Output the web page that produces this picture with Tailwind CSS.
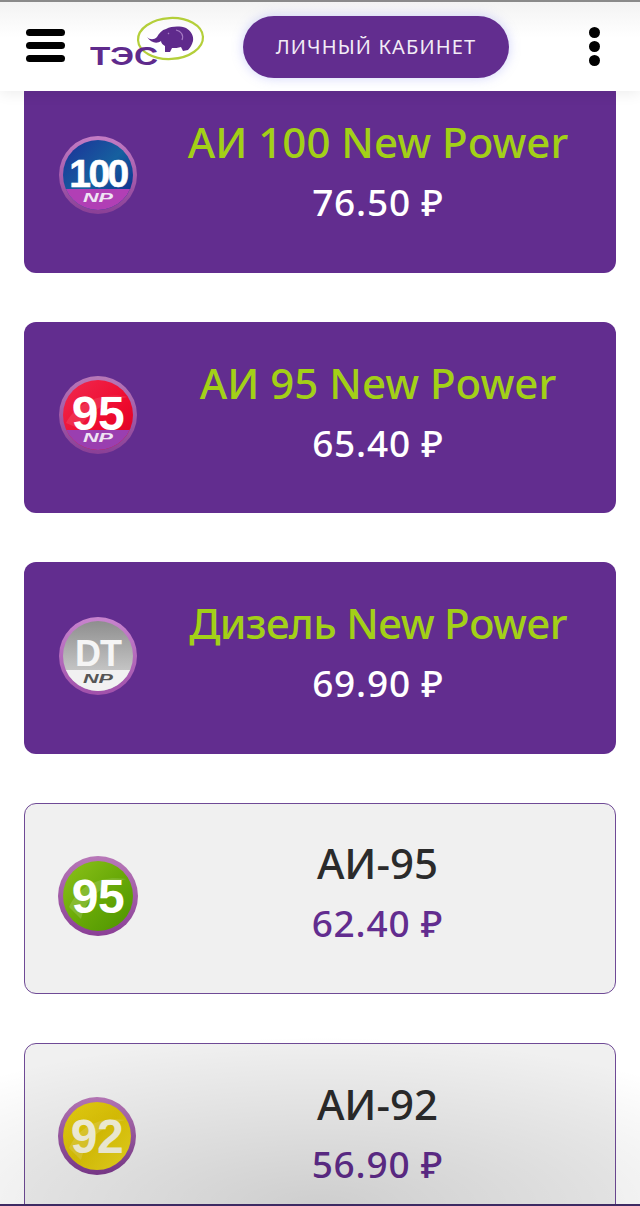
<!DOCTYPE html>
<html lang="en">

<head>
    <meta charset="UTF-8">
    <meta name="viewport" content="width=device-width, initial-scale=1.0">
    <title>ТЭС</title>
    <script src="https://cdn.jsdelivr.net/npm/@tailwindcss/browser@4"></script>
</head>

<body class="bg-white font-['Noto_Sans',sans-serif]">
    <div class="relative w-[640px] h-[1206px] overflow-hidden">
        <!-- Header -->
        <header class="relative z-10 h-[91px] bg-gradient-to-b from-[#f3f3f3] to-white to-40% border-t-2 border-[#8a8a8a] shadow-[0_2px_14px_rgba(0,0,0,0.08)] flex items-center">
            <div class="ml-[26px] w-[39px] flex flex-col gap-[6px] -mt-[2px]">
                <span class="block h-[7px] rounded-full bg-black"></span>
                <span class="block h-[7px] rounded-full bg-black"></span>
                <span class="block h-[7px] rounded-full bg-black"></span>
            </div>
            <svg class="ml-[25px] -mt-[3px] shrink-0" width="116" height="60" viewBox="90 15 116 60">
                <ellipse cx="170.5" cy="38.5" rx="32.5" ry="20.5" transform="rotate(-3 170.5 38.5)" fill="none" stroke="#b4cf3a" stroke-width="2.2"/>
                <path d="M147 37C150 40 154 40 157 37C159 33 162 30 166 29C172 26 180 26 186 28C191 31 194 36 193 41C192 45 190 48 188 50L183 51L181 47C178 48 175 48 172 48L170 52L165 52L165 46C163 45 161 43 161 41C157 44 151 43 147 37Z" fill="#5f2a8c"/>
                <path d="M176 30C181 31 184 35 182 40M168 33l1 1" fill="none" stroke="#a77bc4" stroke-width="1.2"/>
                <text x="90" y="65" font-family="Liberation Sans" font-weight="700" font-size="25" textLength="68" lengthAdjust="spacingAndGlyphs" fill="#5f2a8c">ТЭС</text>
            </svg>
            <a class="ml-[37px] w-[266px] h-[62px] rounded-full bg-[#622d8f] text-[#f2ecf6] text-[20px] tracking-[1.15px] flex items-center justify-center shadow-[0_0_12px_rgba(120,130,240,0.35)]">ЛИЧНЫЙ КАБИНЕТ</a>
            <div class="ml-[80px] flex flex-col gap-[3px]">
                <span class="block w-[11px] h-[11px] rounded-full bg-black"></span>
                <span class="block w-[11px] h-[11px] rounded-full bg-black"></span>
                <span class="block w-[11px] h-[11px] rounded-full bg-black"></span>
            </div>
        </header>

        <!-- Fuel list -->
        <main class="px-[24px] flex flex-col gap-[49px] -mt-[10px]">
            <section class="h-[192px] rounded-[12px] bg-[#622d8f] flex items-center">
                <div class="w-[116px] pl-[34px] pb-[5px] shrink-0">
                    <svg width="80" height="80" viewBox="0 0 80 80">
                        <defs>
                            <linearGradient id="ring1" x1="0" y1="0" x2="0" y2="1">
                                <stop offset="0" stop-color="#c47cc4"/>
                                <stop offset="1" stop-color="#8a3f96"/>
                            </linearGradient>
                            <linearGradient id="blue" x1="0" y1="0" x2="1" y2="1">
                                <stop offset="0" stop-color="#1c2f98"/>
                                <stop offset="0.5" stop-color="#16609f"/>
                                <stop offset="1" stop-color="#0a1f8a"/>
                            </linearGradient>
                            <clipPath id="clip1"><circle cx="40" cy="40" r="35"/></clipPath>
                        </defs>
                        <circle cx="40" cy="40" r="39" fill="url(#ring1)"/>
                        <circle cx="40" cy="40" r="35" fill="url(#blue)"/>
                        <rect x="0" y="54" width="80" height="26" fill="#b13fb5" clip-path="url(#clip1)"/>
                        <text x="40" y="52" text-anchor="middle" font-family="Liberation Sans" font-weight="700" font-size="39" letter-spacing="-2.5" fill="#fff" stroke="#fff" stroke-width="0.6">100</text>
                        <text x="40" y="67" text-anchor="middle" font-family="Liberation Sans" font-weight="700" font-style="italic" font-size="12" textLength="30" lengthAdjust="spacingAndGlyphs" fill="#efe3f3">NP</text>
                    </svg>
                </div>
                <div class="flex-1 text-center pb-[10px]">
                    <h2 class="text-[42px] leading-[60px] font-medium text-[#a3d017]">АИ 100 New Power</h2>
                    <p class="text-[37px] leading-[60px] tracking-[0.8px] font-medium text-white">76.50 ₽</p>
                </div>
            </section>

            <section class="h-[191.3px] rounded-[12px] bg-[#622d8f] flex items-center">
                <div class="w-[116px] pl-[34px] pb-[5px] shrink-0">
                    <svg width="80" height="80" viewBox="0 0 80 80">
                        <defs>
                            <linearGradient id="ring2" x1="0" y1="0" x2="0" y2="1">
                                <stop offset="0" stop-color="#b878b8"/>
                                <stop offset="1" stop-color="#8a3f96"/>
                            </linearGradient>
                            <linearGradient id="red" x1="0" y1="0" x2="1" y2="1">
                                <stop offset="0" stop-color="#f02a50"/>
                                <stop offset="0.6" stop-color="#ee0a2e"/>
                                <stop offset="1" stop-color="#d80020"/>
                            </linearGradient>
                            <clipPath id="clip2"><circle cx="40" cy="40" r="35"/></clipPath>
                        </defs>
                        <circle cx="40" cy="40" r="39" fill="url(#ring2)"/>
                        <circle cx="40" cy="40" r="35" fill="url(#red)"/>
                        <path d="M8 48C18 28 44 16 70 22C50 26 30 36 22 54Z" fill="#fff" opacity="0.1"/>
                        <rect x="0" y="55" width="80" height="25" fill="#9a3fb0" clip-path="url(#clip2)"/>
                        <text x="40" y="55" text-anchor="middle" font-family="Liberation Sans" font-weight="700" font-size="48" letter-spacing="-0.5" fill="#fff">95</text>
                        <text x="40" y="67" text-anchor="middle" font-family="Liberation Sans" font-weight="700" font-style="italic" font-size="12" textLength="30" lengthAdjust="spacingAndGlyphs" fill="#efe3f3">NP</text>
                    </svg>
                </div>
                <div class="flex-1 text-center pb-[10px]">
                    <h2 class="text-[42px] leading-[60px] font-medium text-[#a3d017]">АИ 95 New Power</h2>
                    <p class="text-[37px] leading-[60px] tracking-[0.8px] font-medium text-white">65.40 ₽</p>
                </div>
            </section>

            <section class="h-[191.3px] rounded-[12px] bg-[#622d8f] flex items-center">
                <div class="w-[116px] pl-[34px] pb-[3px] shrink-0">
                    <svg width="80" height="80" viewBox="0 0 80 80">
                        <defs>
                            <linearGradient id="ring3" x1="0" y1="0" x2="0" y2="1">
                                <stop offset="0" stop-color="#c884ce"/>
                                <stop offset="1" stop-color="#a050aa"/>
                            </linearGradient>
                            <linearGradient id="gray" x1="0" y1="0" x2="0" y2="1">
                                <stop offset="0" stop-color="#8e8e8e"/>
                                <stop offset="0.7" stop-color="#c4c4c4"/>
                            </linearGradient>
                            <clipPath id="clip3"><circle cx="40" cy="40" r="35"/></clipPath>
                        </defs>
                        <circle cx="40" cy="40" r="39" fill="url(#ring3)"/>
                        <circle cx="40" cy="40" r="35" fill="url(#gray)"/>
                        <rect x="0" y="54" width="80" height="26" fill="#f1f1f1" clip-path="url(#clip3)"/>
                        <text x="40" y="50" text-anchor="middle" font-family="Liberation Sans" font-weight="700" font-size="36" letter-spacing="-1" fill="#f5f5f5">DT</text>
                        <text x="40" y="67" text-anchor="middle" font-family="Liberation Sans" font-weight="700" font-style="italic" font-size="12" textLength="30" lengthAdjust="spacingAndGlyphs" fill="#555">NP</text>
                    </svg>
                </div>
                <div class="flex-1 text-center pb-[10px]">
                    <h2 class="text-[42px] leading-[60px] tracking-[-0.7px] font-medium text-[#a3d017]">Дизель New Power</h2>
                    <p class="text-[37px] leading-[60px] tracking-[0.8px] font-medium text-white">69.90 ₽</p>
                </div>
            </section>

            <section class="h-[191.3px] rounded-[12px] bg-[#f0f0f0] border border-[#6f4a96] flex items-center">
                <div class="w-[115px] pl-[32px] pb-[4px] shrink-0">
                    <svg width="82" height="82" viewBox="0 0 82 82">
                        <defs>
                            <linearGradient id="ring4" x1="0" y1="0" x2="0" y2="1">
                                <stop offset="0" stop-color="#b878b8"/>
                                <stop offset="1" stop-color="#8a3f96"/>
                            </linearGradient>
                            <linearGradient id="green" x1="0" y1="0" x2="1" y2="1">
                                <stop offset="0" stop-color="#8cc21a"/>
                                <stop offset="0.5" stop-color="#6aaa08"/>
                                <stop offset="1" stop-color="#4c9400"/>
                            </linearGradient>
                        </defs>
                        <circle cx="41" cy="41" r="40" fill="url(#ring4)"/>
                        <circle cx="41" cy="41" r="35" fill="url(#green)"/>
                        <path d="M12 52C22 30 44 20 70 24C50 28 30 40 24 64Z" fill="#fff" opacity="0.15"/>
                        <text x="41" y="58" text-anchor="middle" font-family="Liberation Sans" font-weight="700" font-size="48" letter-spacing="-0.5" fill="#fff">95</text>
                    </svg>
                </div>
                <div class="flex-1 text-center pb-[10px]">
                    <h2 class="text-[42px] leading-[60px] font-medium text-[#2b2b2b]">АИ-95</h2>
                    <p class="text-[37px] leading-[60px] tracking-[0.8px] font-medium text-[#622d8f]">62.40 ₽</p>
                </div>
            </section>

            <section class="h-[191.3px] rounded-[12px] bg-[#f0f0f0] border border-[#6f4a96] flex items-center">
                <div class="w-[115px] pl-[32px] pb-[5px] shrink-0">
                    <svg width="80" height="80" viewBox="0 0 80 80">
                        <defs>
                            <linearGradient id="ring5" x1="0" y1="0" x2="0" y2="1">
                                <stop offset="0" stop-color="#b878b8"/>
                                <stop offset="1" stop-color="#7f3a90"/>
                            </linearGradient>
                            <linearGradient id="yellow" x1="0" y1="0" x2="1" y2="1">
                                <stop offset="0" stop-color="#e6cf12"/>
                                <stop offset="0.5" stop-color="#dcc205"/>
                                <stop offset="1" stop-color="#f0dc20"/>
                            </linearGradient>
                        </defs>
                        <circle cx="40" cy="40" r="39" fill="url(#ring5)"/>
                        <circle cx="40" cy="40" r="34" fill="url(#yellow)"/>
                        <path d="M12 52C22 30 44 20 68 24C50 28 30 40 24 64Z" fill="#fff" opacity="0.15"/>
                        <text x="40" y="57" text-anchor="middle" font-family="Liberation Sans" font-weight="700" font-size="48" letter-spacing="-0.5" fill="#f7f4dc">92</text>
                    </svg>
                </div>
                <div class="flex-1 text-center pb-[10px]">
                    <h2 class="text-[42px] leading-[60px] font-medium text-[#2b2b2b]">АИ-92</h2>
                    <p class="text-[37px] leading-[60px] tracking-[0.8px] font-medium text-[#622d8f]">56.90 ₽</p>
                </div>
            </section>
        </main>

        <!-- Bottom screen shade -->
        <div class="absolute inset-x-0 bottom-0 h-[170px] bg-[radial-gradient(ellipse_80%_100%_at_50%_100%,rgba(0,0,0,0.14),transparent)] pointer-events-none"></div>
        <div class="absolute inset-x-0 bottom-0 h-[2px] bg-[#3d2a63]"></div>
    </div>
</body>

</html>
